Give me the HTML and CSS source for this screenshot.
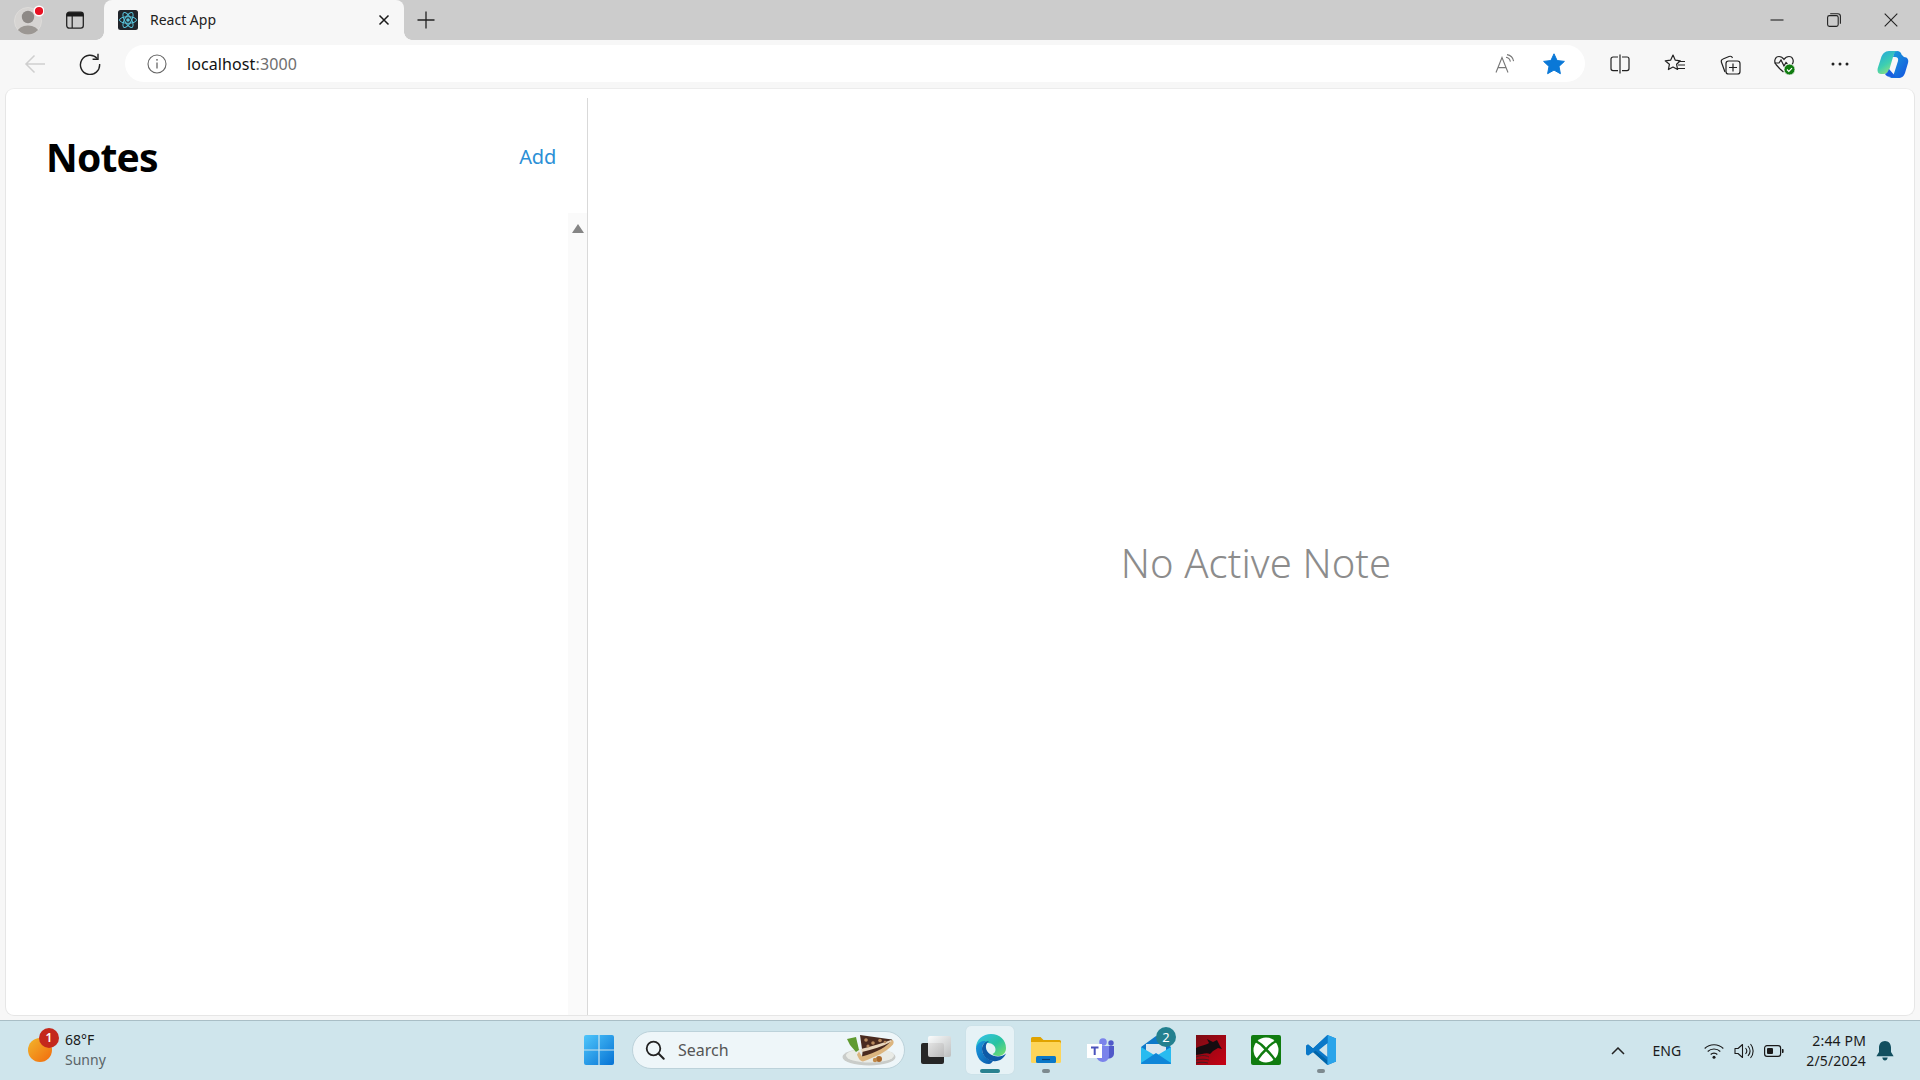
FILE: index.html
```html
<!DOCTYPE html>
<html lang="en">
<head>
<meta charset="utf-8">
<title>React App</title>
<link rel="stylesheet" href="styles.css">
</head>
<body>
<div class="window">
  <header class="tabstrip">
    <div class="strip-btn avatar-btn">
      <svg width="30" height="30" viewBox="0 0 30 30"><defs><clipPath id="avc"><circle cx="14" cy="16" r="13.5"/></clipPath></defs><circle cx="14" cy="16" r="13.5" fill="#d6d4d2" stroke="#dedcda"/><g clip-path="url(#avc)"><circle cx="14" cy="12" r="6.2" fill="#8d8986"/><ellipse cx="14" cy="27" rx="10.5" ry="6.5" fill="#9b9793"/></g><circle cx="25" cy="6" r="4.8" fill="#e81123" stroke="#fff" stroke-width="1.4"/></svg>
    </div>
    <div class="strip-btn">
      <svg width="20" height="20" viewBox="0 0 20 20"><rect x="1.7" y="2.2" width="16.6" height="16" rx="2.6" fill="none" stroke="#222" stroke-width="1.3"/><path d="M1.7 6.4V4.8a2.6 2.6 0 0 1 2.6-2.6h11.4a2.6 2.6 0 0 1 2.6 2.6v1.6z" fill="#1a1a1a"/><path d="M7.2 6v12" stroke="#222" stroke-width="1.2"/></svg>
    </div>
    <div class="tab">
      <svg class="favicon" width="20" height="20" viewBox="0 0 20 20"><rect width="20" height="20" rx="2.5" fill="#21252b"/><g fill="none" stroke="#58c4dc" stroke-width="1"><ellipse cx="10" cy="10" rx="8.5" ry="3.3"/><ellipse cx="10" cy="10" rx="8.5" ry="3.3" transform="rotate(60 10 10)"/><ellipse cx="10" cy="10" rx="8.5" ry="3.3" transform="rotate(120 10 10)"/></g><circle cx="10" cy="10" r="1.8" fill="#58c4dc"/></svg>
      <span class="tab-title">React App</span>
      <svg class="tab-close" width="12" height="12" viewBox="0 0 12 12"><path d="M1.5 1.5l9 9M10.5 1.5l-9 9" stroke="#1a1a1a" stroke-width="1.5"/></svg>
    </div>
    <div class="strip-btn new-tab">
      <svg width="18" height="18" viewBox="0 0 18 18"><path d="M9 .5v17M.5 9h17" stroke="#222" stroke-width="1.3"/></svg>
    </div>
    <div class="win-controls">
      <div class="win-btn"><svg width="14" height="14" viewBox="0 0 14 14"><path d="M.5 7h13" stroke="#222" stroke-width="1.1"/></svg></div>
      <div class="win-btn"><svg width="14" height="14" viewBox="0 0 14 14"><rect x=".6" y="2.6" width="10.6" height="10.8" rx="1.8" fill="none" stroke="#222" stroke-width="1.1"/><path d="M3.2 .7h7.6a2.6 2.6 0 0 1 2.6 2.6v7.4" fill="none" stroke="#222" stroke-width="1.1"/></svg></div>
      <div class="win-btn"><svg width="14" height="14" viewBox="0 0 14 14"><path d="M.7.7l12.6 12.6M13.3.7L.7 13.3" stroke="#222" stroke-width="1.1"/></svg></div>
    </div>
  </header>

  <nav class="toolbar">
    <div class="tool-btn"><svg width="22" height="20" viewBox="0 0 22 20"><path d="M21 10H2M10.5 1.5L2 10l8.5 8.5" fill="none" stroke="#cfcfcf" stroke-width="1.5"/></svg></div>
    <div class="tool-btn"><svg width="22" height="22" viewBox="0 0 22 22"><path d="M18.3 5.6A9.6 9.6 0 1 0 20.6 11" fill="none" stroke="#222" stroke-width="1.4"/><path d="M19 .8v5.4h-5.4" fill="none" stroke="#222" stroke-width="1.4"/></svg></div>
    <div class="address">
      <svg class="info" width="20" height="20" viewBox="0 0 20 20"><circle cx="10" cy="10" r="9" fill="none" stroke="#666" stroke-width="1.1"/><path d="M10 8.6v6" stroke="#666" stroke-width="1.3"/><circle cx="10" cy="5.8" r=".9" fill="#666"/></svg>
      <span class="url">localhost<span class="port">:3000</span></span>
      <svg class="read-aloud" width="20" height="20" viewBox="0 0 20 20"><path d="M1 18.5L7 3.5l6 15M3.2 13.6h7.6" fill="none" stroke="#777" stroke-width="1.1"/><path d="M11 3.2c2.6.4 4 2 4.4 4.4M12 .6c3.8.5 6 3 6.6 6.6" fill="none" stroke="#777" stroke-width="1.1"/></svg>
      <svg class="star" width="22" height="22" viewBox="0 0 22 22"><path d="M11 .8l3.1 6.7 7.3.9-5.4 5 1.4 7.3L11 17.1l-6.4 3.6L6 13.4.6 8.4l7.3-.9z" fill="#0a78d7" stroke="#0a78d7" stroke-linejoin="round"/></svg>
    </div>
    <div class="tool-icons">
      <div class="tool-btn"><svg width="20" height="20" viewBox="0 0 20 20"><path d="M8 3H3a2 2 0 0 0-2 2v9.600a2 2 0 0 0 2 2h5M12 3h5a2 2 0 0 1 2 2v9.600a2 2 0 0 1-2 2h-5" fill="none" stroke="#222" stroke-width="1.2"/><path d="M10 .5v19" stroke="#222" stroke-width="1.2"/></svg></div>
      <div class="tool-btn"><svg width="22" height="20" viewBox="0 0 22 20"><path d="M9 1l2.300 5.200 5 .6-3.700 3.500 1 5.200L9 13l-4.600 2.500 1-5.200L1.200 6.800l5.400-.6z" fill="none" stroke="#222" stroke-width="1.2" stroke-linejoin="round"/><path d="M14.500 7.500H21M14 11h7M13 14.500h8" stroke="#222" stroke-width="1.2"/></svg></div>
      <div class="tool-btn"><svg width="22" height="22" viewBox="0 0 22 22"><path d="M6 19L2.500 9.500c-.6-1.600 0-3 1.500-3.500L10 3.500c1.500-.5 3 0 3.500 1.500" fill="none" stroke="#222" stroke-width="1.2"/><rect x="7" y="8" width="14" height="13" rx="2.600" fill="#f7f7f7" stroke="#222" stroke-width="1.200"/><path d="M14 10.500v8M10 14.500h8" stroke="#222" stroke-width="1.200"/></svg></div>
      <div class="tool-btn"><svg width="24" height="24" viewBox="0 0 24 24"><path d="M7 17L3 12.500C.6 9.500 2 4.500 6 4.500c2.500 0 4 1.500 5 3 1-1.500 2.500-3 5-3 4 0 5.400 5 3 8" fill="none" stroke="#222" stroke-width="1.200"/><path d="M1.500 11H6l2-3 3 6 2-3.500 1.500 1.500" fill="none" stroke="#222" stroke-width="1.200"/><path d="M7 17l3.500 3" stroke="#222" stroke-width="1.200"/><circle cx="16.500" cy="17.500" r="5.500" fill="#107c10" stroke="#f7f7f7" stroke-width=".8"/><path d="M14 17.500l1.800 1.800 3.200-3.200" fill="none" stroke="#fff" stroke-width="1.200"/></svg></div>
      <div class="tool-btn"><svg width="18" height="4" viewBox="0 0 18 4"><circle cx="2" cy="2" r="1.500" fill="#222"/><circle cx="9" cy="2" r="1.500" fill="#222"/><circle cx="16" cy="2" r="1.500" fill="#222"/></svg></div>
      <div class="tool-btn copilot"><svg width="32" height="28" viewBox="0 0 32 28"><defs><linearGradient id="cop1" x1="0" y1="0" x2="0.6" y2="1"><stop offset="0" stop-color="#23a4e0"/><stop offset=".6" stop-color="#3ecfb0"/><stop offset="1" stop-color="#9ae27a"/></linearGradient><linearGradient id="cop2" x1="0" y1="0" x2="1" y2="1"><stop offset="0" stop-color="#1aa6d8"/><stop offset="1" stop-color="#1550e0"/></linearGradient></defs><path d="M12 1h9c-3 .5-4 3-5 6l-3.500 12c-1 3-3 5-6 5H4C1 24 0 21 .8 18L4 8c1.200-4 4-7 8-7z" fill="url(#cop1)"/><path d="M20 1c2.500 0 4 1.500 4.500 3.500L27 7c3.500 0 5 3 4 6l-3 10c-1 3-3 5-7 5h-9c3-.5 4.500-3 5.500-6L21 11c.7-2.500-.5-4-3-4h-2c1-4 2-6 4-6z" fill="url(#cop2)"/><path d="M12 19l7 8h-5c-3 0-5-1-6-3 2-.5 3-2.500 4-5z" fill="#1a5fe0"/></svg></div>
    </div>
  </nav>

  <div class="content-wrap">
    <main class="page">
      <aside class="sidebar">
        <div class="sidebar-header">
          <h1 class="sidebar-title">Notes</h1>
          <a class="add-link">Add</a>
        </div>
        <div class="sidebar-body">
          <div class="note-list"></div>
          <div class="scrollbar"><span class="scroll-arrow"></span></div>
        </div>
      </aside>
      <section class="main-pane">
        <p class="no-note">No Active Note</p>
      </section>
    </main>
  </div>

  <footer class="taskbar">
    <div class="weather">
      <span class="sun"><span class="sun-badge">1</span></span>
      <div class="weather-text">
        <span class="temp">68°F</span>
        <span class="cond">Sunny</span>
      </div>
    </div>
    <div class="tb-center">
      <div class="start-btn"><svg width="30" height="30" viewBox="0 0 30 30"><defs><linearGradient id="win" x1="0" y1="0" x2="1" y2="1"><stop offset="0" stop-color="#4fc6fb"/><stop offset="1" stop-color="#0672d4"/></linearGradient></defs><path d="M2 0h12.400v14.400H0V2a2 2 0 0 1 2-2zM15.600 0H28a2 2 0 0 1 2 2v12.400H15.600zM0 15.600h14.400V30H2a2 2 0 0 1-2-2zM15.600 15.600H30V28a2 2 0 0 1-2 2H15.600z" fill="url(#win)"/></svg></div>
      <div class="search">
        <svg class="search-icon" width="20" height="20" viewBox="0 0 20 20"><circle cx="8.500" cy="8.500" r="6.800" fill="none" stroke="#222" stroke-width="1.800"/><path d="M13.500 13.500l5.200 5.200" stroke="#222" stroke-width="2" stroke-linecap="round"/></svg>
        <span class="search-text">Search</span>
        <svg class="pie" width="54" height="32" viewBox="0 0 54 32"><ellipse cx="27" cy="23" rx="26.500" ry="8.500" fill="#c9ccc9"/><ellipse cx="28" cy="21.500" rx="24" ry="7" fill="#e9ebe6"/><path d="M5 5l9-2 3 13-3 2-6-7z" fill="#5f9a30"/><path d="M18 1l32 4.500c.5 5-9 11-28 18l-2-1 .5-4z" fill="#4a2a1f"/><path d="M17 17.500l3 5c14-4 26-10 30-17 2 1 2 3 1 5-7 8-17 12-30 17-3 0-5-4-6-7z" fill="#dcb57f"/><path d="M19 15c12-3 22-6 30-9l.5 1.500c-9 5-19 8-29.500 10.500z" fill="#e8d6bd"/><g fill="#b98a5e"><circle cx="24" cy="6" r="1.800"/><circle cx="31" cy="9" r="1.800"/><circle cx="38" cy="6.500" r="1.800"/><circle cx="26" cy="12" r="1.600"/><circle cx="43" cy="8" r="1.300"/></g><circle cx="37" cy="25" r="3" fill="#a9692c"/><circle cx="33" cy="26" r="2.200" fill="#c08a4a"/></svg>
      </div>
      <div class="tb-btn"><svg width="32" height="30" viewBox="0 0 32 30"><defs><linearGradient id="tv" x1="0" y1="0" x2="1" y2="1"><stop offset="0" stop-color="#fff"/><stop offset="1" stop-color="#bbb"/></linearGradient></defs><rect x="1" y="8" width="23" height="21" rx="2" fill="#262626"/><rect x="8" y="1" width="23" height="21" rx="2" fill="url(#tv)" opacity=".92"/></svg></div>
      <div class="tb-btn tb-active">
        <svg width="32" height="32" viewBox="0 0 32 32"><defs><linearGradient id="edgeA" x1="0" y1="0" x2="1" y2="1"><stop offset="0" stop-color="#35c1f1"/><stop offset=".55" stop-color="#28c3a0"/><stop offset="1" stop-color="#7ee06a"/></linearGradient><linearGradient id="edgeB" x1="0" y1="0" x2="1" y2="1"><stop offset="0" stop-color="#1b9de2"/><stop offset="1" stop-color="#0b57a8"/></linearGradient></defs><path d="M1 15C1 6.500 8 1 16 1c8.500 0 15 6 15 14 0 5.500-4 8-8 8-3 0-4.500-1-5.500-2 2-1 3-2.500 3-4.500 0-3.500-3-6.500-7.500-6.500S6 11.500 1 15z" fill="url(#edgeA)"/><path d="M1 15C3 8 8 8 11 8c-3 2-4 5-4 8 0 6 5.500 11 11 12-1.500 2-2.500 3-4 3C6 31 1 24 1 15z" fill="url(#edgeB)"/><path d="M18 28c-5-.5-11-5-11-12 0-4 3-8 7-8-2.500 2-3.500 4-3 7 .5 4.500 6 8.500 12 8.500 3 0 6-1 8-3-2 5-7 8.500-13 7.500z" fill="#0e5aa7"/></svg>
        <span class="run run-active"></span>
      </div>
      <div class="tb-btn">
        <svg width="30" height="26" viewBox="0 0 30 26"><path d="M0 1.500A1.500 1.500 0 0 1 1.500 0h8l3 3H28.500A1.500 1.500 0 0 1 30 4.500V8H0z" fill="#e0a300"/><path d="M0 5h28.500A1.500 1.500 0 0 1 30 6.500V24.500a1.500 1.500 0 0 1-1.500 1.500h-27A1.500 1.500 0 0 1 0 24.500z" fill="#fdd55a"/><rect x="5" y="19" width="20" height="7" rx="1.500" fill="#0a78c8"/><path d="M11 22.500h8" stroke="#0a3e70" stroke-width="1.200"/></svg>
        <span class="run"></span>
      </div>
      <div class="tb-btn">
        <svg width="28" height="24" viewBox="0 0 28 24"><circle cx="16" cy="4" r="3.800" fill="#7b83eb"/><circle cx="24" cy="5" r="2.700" fill="#5059c9"/><path d="M19 8h8v8a5 5 0 0 1-6 4.500z" fill="#5059c9"/><path d="M9 8h13v10a6 6 0 0 1-6 6 7 7 0 0 1-7-6z" fill="#7b83eb"/><rect x="0" y="6" width="15" height="14" fill="#fff"/><rect x="2" y="7.500" width="11" height="11" rx="1" fill="#fff"/><path d="M4 9.500h7.500M7.700 9.500V17" stroke="#4b53bc" stroke-width="2"/></svg>
      </div>
      <div class="tb-btn">
        <svg width="30" height="28" viewBox="0 0 30 28"><path d="M0 11L15 0l15 11v15.500A1.500 1.500 0 0 1 28.500 28h-27A1.500 1.500 0 0 1 0 26.500z" fill="#0f78c9"/><path d="M5 8h20v9l-10 5-10-5z" fill="#dbe6ee"/><path d="M0 11l15 9 15-9v15.500A1.500 1.500 0 0 1 28.500 28h-27A1.500 1.500 0 0 1 0 26.500z" fill="#28bbf0"/><path d="M0 27l15-10 15 10v-.5c0 1-.5 1.500-1.500 1.500h-27C.5 28 0 27.500 0 27z" fill="#0f86d8"/></svg>
        <span class="tb-badge">2</span>
      </div>
      <div class="tb-btn">
        <svg width="30" height="30" viewBox="0 0 30 30"><defs><linearGradient id="red" x1="0" y1="0" x2="1" y2="1"><stop offset="0" stop-color="#7a0c14"/><stop offset="1" stop-color="#c80014"/></linearGradient></defs><rect width="30" height="30" fill="url(#red)"/><path d="M0 13c6-3 10-3 13-5l-2-4 6 3 4-2 3 6 2 3-4-1-5 3-3 3c-4-2-9 1-16 1z" fill="#160c10"/><path d="M0 22c5-2 9-2 13 0M0 25c5-1 9-1 13 0M0 28c4-1 8-1 12 0" stroke="#4a1a20" stroke-width="1" fill="none"/></svg>
      </div>
      <div class="tb-btn">
        <svg width="30" height="30" viewBox="0 0 30 30"><rect width="30" height="30" rx="2" fill="#107c10"/><circle cx="15" cy="15" r="12.500" fill="#fff"/><path d="M4.500 6Q11 9 15 14.500 19 9 25.500 6M6 25Q10 19 15 14.500 20 19 24 25" fill="none" stroke="#107c10" stroke-width="2.400"/></svg>
      </div>
      <div class="tb-btn">
        <svg width="30" height="30" viewBox="0 0 30 30"><path d="M21.500 0L30 3.500v23L21.500 30 7 16.500l-5 4L0 19v-8l2-1.500 5 4z" fill="#0a78c8"/><path d="M0 11l2-1.500 19.500 16L21.500 30z" fill="#0065a9"/><path d="M21.500 8L13 15l8.500 7z" fill="#cfe5ec"/><path d="M21.500 0L30 3.500v23L21.500 30z" fill="#2aa4ea"/><path d="M2 9.500L7 13.500 21.500 0v8L2 20.500 0 19v-8z" fill="#0a78c8"/></svg>
        <span class="run"></span>
      </div>
    </div>
    <div class="tray">
      <svg class="chev" width="14" height="8" viewBox="0 0 14 8"><path d="M1 7l6-6 6 6" fill="none" stroke="#222" stroke-width="1.500"/></svg>
      <span class="lang">ENG</span>
      <div class="tray-icons">
        <svg width="20" height="16" viewBox="0 0 20 16"><path d="M.7 5.500c5-5 13.600-5 18.600 0M3.700 8.500c3.400-3.400 9.200-3.400 12.600 0M6.700 11.500c1.800-1.800 4.800-1.800 6.600 0" fill="none" stroke="#1a1a1a" stroke-width="1.100"/><circle cx="10" cy="14.200" r="1.500" fill="#1a1a1a"/></svg>
        <svg width="20" height="16" viewBox="0 0 20 16"><path d="M1 5.500h3L8.500 1.500v13L4 10.500H1z" fill="none" stroke="#1a1a1a" stroke-width="1.100" stroke-linejoin="round"/><path d="M11.500 5c1.500 1.700 1.500 4.300 0 6M14 3c2.500 3 2.500 7 0 10M16.500 1c3.500 4 3.500 10 0 14" fill="none" stroke="#1a1a1a" stroke-width="1.100"/></svg>
        <svg width="20" height="14" viewBox="0 0 20 14"><rect x=".6" y="1.600" width="16" height="10.800" rx="2.400" fill="none" stroke="#1a1a1a" stroke-width="1.200"/><rect x="3" y="4" width="6" height="6" rx="1" fill="#1a1a1a"/><path d="M18 5h.6a1 1 0 0 1 1 1v2a1 1 0 0 1-1 1H18z" fill="#1a1a1a"/></svg>
      </div>
      <div class="clock">
        <span>2:44 PM</span>
        <span>2/5/2024</span>
      </div>
      <svg class="bell" width="18" height="20" viewBox="0 0 18 20"><path d="M9 0c3.500 0 6 2.800 6 6.500V11l2.600 4.200H.4L3 11V6.500C3 2.800 5.500 0 9 0zM6.300 16.600h5.400C11.400 18.500 10.400 19.600 9 19.600s-2.400-1.100-2.700-3z" fill="#124f5f"/></svg>
    </div>
  </footer>
</div>
</body>
</html>
```

FILE: styles.css
```css
* { box-sizing: border-box; }
html, body { margin: 0; height: 100%; overflow: hidden; }
body { font-family: "Noto Sans", "Open Sans", sans-serif; color: #1a1a1a; }
.window { display: flex; flex-direction: column; height: 100vh; width: 100%; background: #f7f7f7; }

/* Title strip */
.tabstrip { display: flex; align-items: center; height: 40px; background: #cccccc; padding-left: 6px; flex: none; }
.strip-btn { width: 44px; height: 40px; display: flex; align-items: center; justify-content: center; flex: none; }
.avatar-btn { margin-right: 3px; padding-left: 2px; }
.tab { position: relative; width: 300px; height: 40px; margin-left: 7px; padding: 0 14px; display: flex; align-items: center; background: #f7f7f7; border-radius: 8px 8px 0 0; flex: none; }
.tab::before, .tab::after { content: ""; position: absolute; bottom: 0; width: 8px; height: 8px; }
.tab::before { left: -8px; background: radial-gradient(circle at 0 0, transparent 7.5px, #f7f7f7 8px); }
.tab::after { right: -8px; background: radial-gradient(circle at 100% 0, transparent 7.5px, #f7f7f7 8px); }
.favicon { flex: none; }
.tab-title { margin: -2px 0 0 12px; font-size: 14px; color: #222; flex: 1; letter-spacing: 0; }
.tab-close { margin-right: 0; }
.new-tab { width: 36px; margin-left: 4px; }
.win-controls { margin-left: auto; width: 172px; display: flex; height: 40px; }
.win-btn { flex: 1; display: flex; align-items: center; justify-content: center; }

/* Toolbar */
.toolbar { display: flex; align-items: center; height: 48px; padding: 0 5px 0 13px; background: #f7f7f7; flex: none; }
.tool-btn { width: 44px; height: 40px; margin-right: 11px; display: flex; align-items: center; justify-content: center; flex: none; }
.toolbar > .tool-btn:nth-child(2) { margin-right: 13px; }
.address { width: 1460px; height: 37px; margin-top: -1px; border-radius: 19px; background: #fff; display: flex; align-items: center; padding-left: 22px; padding-right: 20px; flex: none; }
.url { margin-left: 20px; font-size: 16px; color: #111; letter-spacing: .1px; flex: 1; }
.port { color: #6e6e6e; }
.read-aloud { margin-right: 28px; }
.tool-icons { display: flex; align-items: center; margin-left: 13px; }
.tool-icons .tool-btn:nth-child(5) { margin-right: 9px; }
.tool-icons .copilot { margin-right: 0; }

/* Page */
.content-wrap { flex: 1; padding: 0 5px 4px; min-height: 0; }
.page { height: 100%; display: flex; background: #fff; border: 1px solid #e6e6e6; border-top-color: #ececec; border-radius: 9px; padding-top: 9px; overflow: hidden; }
.sidebar { width: 582px; border-right: 1px solid #d9d9d9; display: flex; flex-direction: column; flex: none; }
.sidebar-header { height: 115px; padding: 34px 31px 0 31px; display: flex; justify-content: space-between; align-items: flex-start; flex: none; }
.sidebar-title { margin: 0; font-size: 39px; line-height: 50px; font-weight: 700; color: #000; letter-spacing: -.8px; padding-left: 9px; }
.add-link { font-size: 20px; line-height: 50px; color: #2b8fd6; letter-spacing: -.2px; }
.sidebar-body { flex: 1; display: flex; min-height: 0; }
.note-list { flex: 1; }
.scrollbar { width: 19px; background: #fafafa; padding-top: 11px; flex: none; }
.scroll-arrow { display: block; width: 0; height: 0; margin: 0 auto; border-left: 6.5px solid transparent; border-right: 6.5px solid transparent; border-bottom: 9px solid #858585; }
.main-pane { flex: 1; display: flex; align-items: center; justify-content: center; padding: 12px 0 0 10px; }
.no-note { margin: 0; font-size: 40px; font-weight: 300; color: #8c8c8c; letter-spacing: .1px; }

/* Taskbar */
.taskbar { display: flex; align-items: center; height: 60px; background: #cfe5ec; border-top: 1px solid #a9bec6; flex: none; }
.weather { width: 577px; display: flex; align-items: center; padding-left: 28px; flex: none; }
.sun { position: relative; display: block; width: 24px; height: 24px; margin-top: -2px; border-radius: 50%; background: linear-gradient(135deg, #f2b62c, #f26a0c); flex: none; }
.sun-badge { position: absolute; left: 11px; top: -10px; width: 20px; height: 20px; border-radius: 50%; background: #c4281c; color: #fff; font-size: 12px; font-weight: 600; line-height: 20px; text-align: center; }
.weather-text { margin-left: 13px; display: flex; flex-direction: column; font-size: 14px; line-height: 20px; margin-top: -1px; }
.temp { color: #1a1a1a; }
.cond { color: #5a6468; }
.tb-center { display: flex; align-items: center; flex: none; margin-top: -1px; }
.start-btn { width: 44px; height: 48px; display: flex; align-items: center; justify-content: center; margin-right: 11px; }
.search { width: 273px; height: 38px; border-radius: 19px; background: #eef6f9; border: 1px solid #bcd2da; display: flex; align-items: center; padding: 0 8px 0 12px; margin-right: 3px; }
.search-text { margin-left: 13px; font-size: 16px; color: #555; flex: 1; }
.pie { flex: none; }
.tb-btn { position: relative; width: 55px; height: 48px; display: flex; align-items: center; justify-content: center; }
.tb-active::before { content: ""; position: absolute; left: 3px; right: 4px; top: 0; bottom: 0; border-radius: 5px; background: #e6f2f6; box-shadow: 0 0 1px #b9ced6; }
.tb-active svg { position: relative; margin-top: -3px; }
.run { position: absolute; left: 50%; bottom: 1px; width: 8px; height: 4px; margin-left: -4px; border-radius: 2px; background: #7d8a8f; }
.run-active { width: 20px; margin-left: -11px; background: #2a8290; }
.tb-badge { position: absolute; left: 28px; top: 1px; width: 20px; height: 20px; border-radius: 50%; background: #23808f; color: #fff; font-size: 13px; line-height: 20px; text-align: center; }
.tray { margin-left: auto; display: flex; align-items: center; padding-right: 26px; flex: none; }
.chev { margin-right: 27px; }
.lang { font-size: 14px; color: #1a1a1a; margin-right: 23px; letter-spacing: .1px; }
.tray-icons { display: flex; align-items: center; gap: 10px; margin-right: 22px; }
.clock { display: flex; flex-direction: column; align-items: flex-end; font-size: 14px; line-height: 20px; color: #1a1a1a; margin-right: 10px; letter-spacing: .15px; }
.bell { flex: none; }
```
